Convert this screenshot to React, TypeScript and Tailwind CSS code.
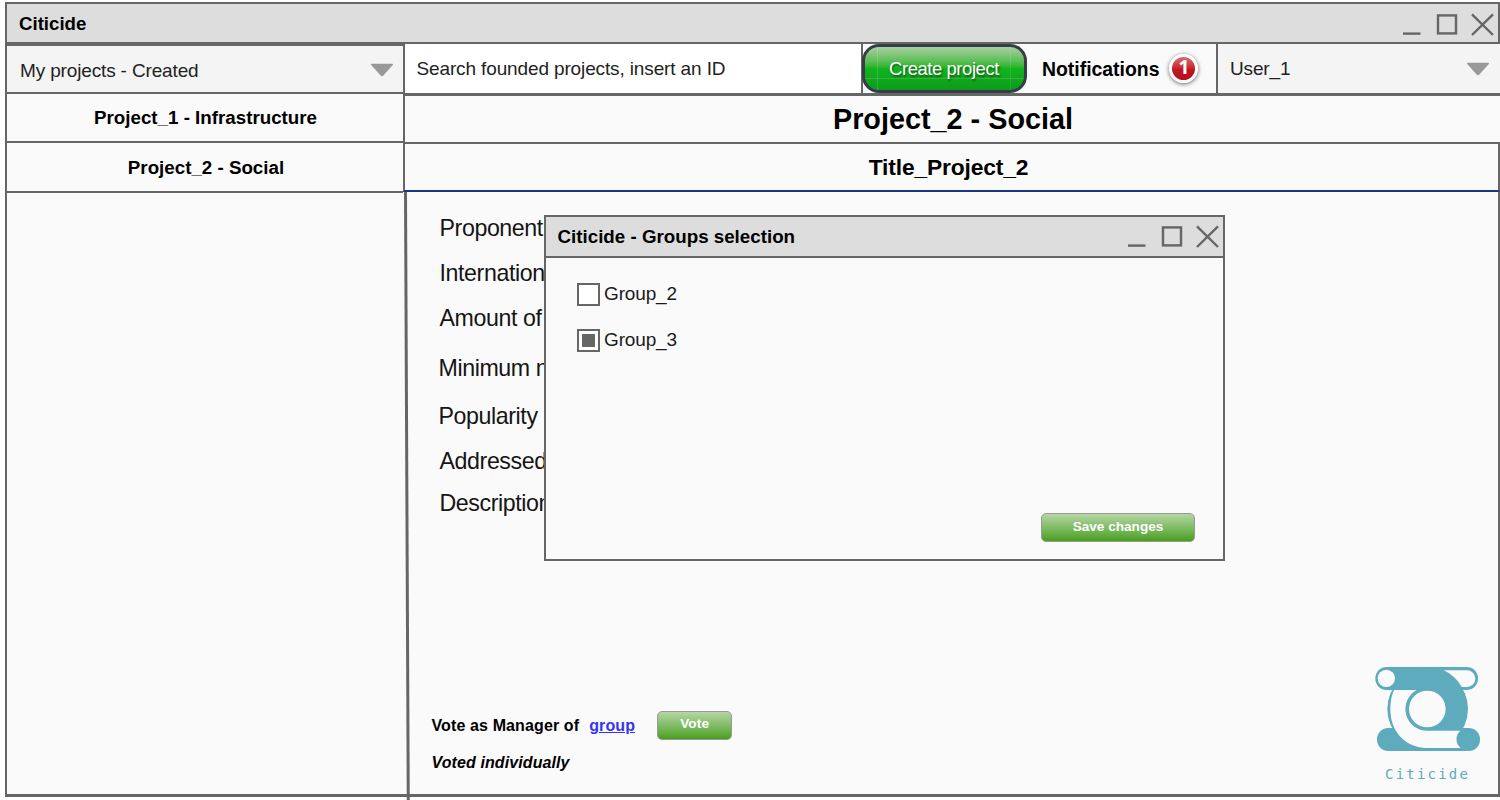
import React from "react";

function WindowControls() {
  return (
    <svg width="92" height="24" viewBox="0 0 92 24" fill="none" stroke="#666" strokeWidth="2.4">
      <path d="M1 20.6H18.5" />
      <rect x="36" y="2.4" width="18" height="18" />
      <path d="M70 1.4L91 22M91 1.4L70 22" />
    </svg>
  );
}

function Caret() {
  return (
    <svg width="24" height="14" viewBox="0 0 24 14" fill="#999">
      <path d="M1.6 0.8H22.4Q23.6 1 22.8 2L13.4 12.6Q12 13.8 10.6 12.6L1.2 2Q.4 1 1.6.8Z" />
    </svg>
  );
}

function Logo() {
  return (
    <div className="flex w-[108px] flex-col items-start text-[#5eabbd]">
      <svg width="108" height="88" viewBox="42 30 324 264" fill="#5eabbd">
        <rect x="51" y="219" width="309" height="69" rx="34" />
        <rect x="46" y="36" width="308" height="69" rx="34" />
        <circle cx="203" cy="162" r="121" />
        <g fill="#fafafa">
          <path d="M102 105H170A65 65 0 0 0 203 227H301A34 34 0 0 0 302 279H195C130 274 91 225 91 162C91 140 95 120 102 105Z" />
          <circle cx="202" cy="162" r="55" />
          <circle cx="79" cy="70" r="26" />
          <path d="M252 46H321A25 25 0 0 1 321 96H305A121 121 0 0 0 252 46Z" />
        </g>
      </svg>
      <div className="mt-[12px] pl-[11px] font-['DejaVu_Sans_Mono',monospace] text-[14px] leading-[18px] tracking-[2.2px]">
        Citicide
      </div>
    </div>
  );
}

function GreenButton({ label, className }: { label: string; className: string }) {
  return (
    <button
      className={`flex items-center justify-center rounded-[5px] border border-[#999] bg-linear-to-b from-[#b5d6a3] to-[#47a012] text-[13.6px] font-bold text-white ${className}`}
    >
      {label}
    </button>
  );
}

function Checkbox({ label, checked }: { label: string; checked?: boolean }) {
  return (
    <label className="flex h-[24px] items-center gap-[4px] text-[19px] tracking-[-0.15px] text-[#1a1a1a]">
      <span className="flex h-[23px] w-[23px] items-center justify-center border-2 border-[#666] bg-white">
        {checked && <span className="h-[13px] w-[13px] bg-[#666]" />}
      </span>
      {label}
    </label>
  );
}

const fields = [
  { label: "Proponent", className: "h-[45px]" },
  { label: "Internation", className: "h-[45px]" },
  { label: "Amount of", className: "h-[50px]" },
  { label: "Minimum n", className: "-ml-px h-[48px]" },
  { label: "Popularity", className: "-ml-px h-[45px]" },
  { label: "Addressed", className: "h-[42px]" },
  { label: "Description", className: "h-[42px]" },
];

function Dialog() {
  return (
    <div className="absolute top-[215px] left-[544px] flex h-[346px] w-[681px] flex-col border-2 border-[#666] bg-[#fafafa]">
      <div className="flex h-[41px] items-center justify-between border-b-2 border-[#666] bg-[#ddd] pr-[4px] pl-[11.5px] text-[18.75px] font-bold">
        <span className="pt-[2px]">Citicide - Groups selection</span>
        <WindowControls />
      </div>
      <div className="flex flex-1 flex-col items-start gap-[22px] pt-[24px] pl-[31px]">
        <Checkbox label="Group_2" />
        <Checkbox label="Group_3" checked />
      </div>
      <div className="flex justify-end pr-[28px] pb-[17px]">
        <GreenButton label="Save changes" className="h-[29px] w-[154px] pb-px" />
      </div>
    </div>
  );
}

export default function App() {
  return (
    <div className="relative h-[800px] w-[1500px] overflow-hidden bg-white pt-[2px] pl-[5px] font-['Liberation_Sans',Arial,sans-serif] whitespace-nowrap text-black">
      <div className="flex h-[795px] flex-col border-b-[3px] border-l-[2.5px] border-[#666] bg-[#fafafa]">
        <header className="flex h-[42px] items-center justify-between border-y-[2px] border-r-[2px] border-[#666] bg-[#ddd] pr-[4px] pl-[12px] text-[18.67px] font-bold">
          <span className="pt-px">Citicide</span>
          <div className="pt-[3px]">
            <WindowControls />
          </div>
        </header>

        <div className="flex min-h-0 flex-1">
          <aside className="flex w-[396px] shrink-0 flex-col text-[18.75px]">
            <div className="flex h-[50px] items-center justify-between border-y-2 border-[#666] bg-[#f4f4f4] pt-[3px] pr-[9px] pl-[13px] text-[19px] tracking-[-0.15px] text-[#222]">
              <span className="pt-[2px]">My projects - Created</span>
              <div className="pb-px">
                <Caret />
              </div>
            </div>
            <div className="flex h-[49px] items-center justify-center border-b-2 border-[#666] pt-[2px] pl-px font-bold">
              Project_1 - Infrastructure
            </div>
            <div className="flex h-[50px] items-center justify-center border-b-2 border-[#666] pt-[3px] pl-[2px] font-bold">
              Project_2 - Social
            </div>
          </aside>

          <main className="relative flex min-w-0 flex-1 flex-col">
            <div className="flex h-[52px] border-b-[3px] border-l-2 border-[#666]">
              <div className="flex w-[458px] items-center border-r-[2px] border-[#666] bg-white pt-[2px] pl-[11.5px] text-[19px] tracking-[-0.13px] text-[#222]">
                Search founded projects, insert an ID
              </div>
              <button className="relative -ml-px flex h-[49px] w-[165px] shrink-0 items-center justify-center rounded-[17px] border-[3px] border-[#373c47] bg-linear-to-b from-[#a6cf9f] via-[#12b31d] via-50% to-[#0c9c1c] text-[18.4px] tracking-[-0.4px] text-white [text-shadow:1px_2px_2px_#17551b]">
                <span className="absolute inset-y-0 left-[12px] w-px bg-white/15" />
                <span className="absolute inset-y-0 right-[13px] w-px bg-white/10" />
                <span className="absolute inset-x-0 top-[31px] h-px bg-white/15" />
                <span className="pt-px pr-px">Create project</span>
              </button>
              <div className="flex flex-1 items-center gap-[10px] pl-[15px]">
                <span className="pt-[3px] text-[19.4px] font-bold">Notifications</span>
                <span className="flex h-[29px] w-[29px] items-center justify-center rounded-full border-[3px] border-white bg-linear-to-b from-[#d96a72] via-[#c01522] via-55% to-[#b90f1e] pb-[3px] font-['Open_Sans',sans-serif] text-[19px] leading-none font-bold text-white shadow-[0_1px_4px_rgba(0,0,0,0.6)]">
                  1
                </span>
              </div>
              <div className="flex w-[284px] items-center justify-between border-l-2 border-[#666] bg-[#f4f4f4] pr-[10px] pl-[12px] text-[19px] tracking-[-0.15px] text-[#222]">
                <span className="pt-[2px]">User_1</span>
                <Caret />
              </div>
            </div>
            <h1 className="flex h-[48px] items-center justify-center border-b-2 border-l-2 border-[#666] pt-px pl-px text-[28.8px] font-bold">
              Project_2 - Social
            </h1>
            <h2 className="flex h-[48px] items-center justify-center border-r-2 border-b-2 border-l-2 border-r-[#666] border-b-[#1a3486] border-l-[#666] pt-px pr-[6px] text-[22.8px] tracking-[-0.15px] font-bold">
              Title_Project_2
            </h2>
            <section className="flex flex-1 flex-col border-r-2 border-[#666] pl-[36.5px] text-[23.2px] tracking-[-0.4px]">
              <ul className="flex h-[513px] flex-col pt-[14px]">
                {fields.map((f) => (
                  <li key={f.label} className={`leading-[45px] text-[#151515] ${f.className}`}>
                    {f.label}
                  </li>
                ))}
              </ul>
              <div className="-ml-[8px] flex h-[40px] items-center text-[16px] font-bold tracking-[0.12px]">
                <span className="pt-[1px]">Vote as Manager of</span>
                <a className="ml-[10px] pt-[1px] text-[#3333ff] underline">group</a>
                <GreenButton label="Vote" className="ml-[22px] h-[29px] w-[75px] pb-px" />
              </div>
              <p className="-ml-[8px] pt-[7px] text-[16px] leading-[22px] font-bold tracking-[0.1px] italic">Voted individually</p>
            </section>
          </main>
        </div>
      </div>

      {/* Slightly slanted column divider that overshoots the window frame. */}
      <div className="absolute top-[192px] left-[403.5px] h-[608px] w-[2.5px] origin-top bg-[#666] [transform:skewX(0.26deg)]" />
      <div className="absolute top-[665px] left-[1374px]">
        <Logo />
      </div>
      <Dialog />
    </div>
  );
}
